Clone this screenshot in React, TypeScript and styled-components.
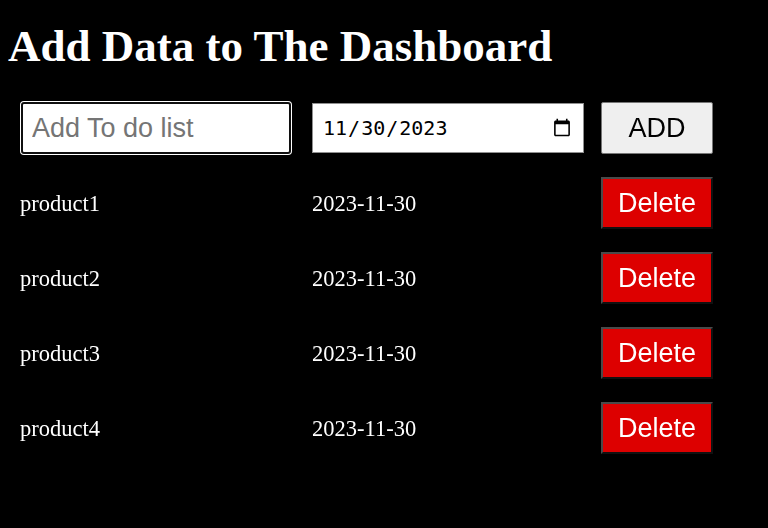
import React, { useState } from "react";
import styled, { createGlobalStyle } from "styled-components";

const Global = createGlobalStyle`
  html, body { background: #000; }
  body { margin: 0; color: #fff; font-family: "Liberation Serif", "Times New Roman", serif; }
`;

const Page = styled.div`
  padding: 19px 0 0 0;
`;

const Title = styled.h1`
  margin: 0 0 0 8px;
  font-family: "Liberation Serif", "Times New Roman", serif;
  font-weight: bold;
  font-size: 45px;
  line-height: 55px;
  color: #fff;
`;

const List = styled.div`
  margin-top: 28px;
  padding-left: 20px;
  display: flex;
  flex-direction: column;
  gap: 23px;
`;

const Row = styled.div`
  display: grid;
  grid-template-columns: 292px 289px 112px;
  align-items: center;
  height: 52px;
`;

const TextInput = styled.input`
  box-sizing: border-box;
  width: 270px;
  height: 52px;
  margin-left: 1px;
  padding: 0 9px;
  border: 2px solid #101010;
  border-radius: 3px;
  box-shadow: 0 0 0 1px #fff;
  outline: none;
  background: #fff;
  font-family: "Liberation Sans", Arial, sans-serif;
  font-size: 27px;
  color: #000;
  &::placeholder { color: #757575; }
`;

const DateInput = styled.input`
  box-sizing: border-box;
  width: 272px;
  height: 50px;
  padding: 0 9px;
  border: 1px solid #8f8f8f;
  border-radius: 0;
  background: #fff;
  font-family: "DejaVu Sans Mono", monospace;
  font-size: 20px;
  color: #000;
  outline: none;
`;

const Btn = styled.button<{ $danger?: boolean }>`
  box-sizing: border-box;
  width: 112px;
  height: 52px;
  padding: 0;
  font-family: "Liberation Sans", Arial, sans-serif;
  font-size: 27px;
  cursor: pointer;
  color: ${(p) => (p.$danger ? "#fff" : "#000")};
  background: ${(p) => (p.$danger ? "#dd0000" : "#efefef")};
  border: ${(p) => (p.$danger ? "2px solid" : "1px solid #767676")};
  border-color: ${(p) => (p.$danger ? "#4a4a4a #111 #111 #4a4a4a" : "#767676")};
  border-radius: ${(p) => (p.$danger ? "0" : "2px")};
`;

const Cell = styled.span`
  padding-top: 2px;
  font-family: "Liberation Serif", "Times New Roman", serif;
  font-size: 22.5px;
  color: #fff;
`;

type Item = { name: string; date: string };

export default function App() {
  const [items] = useState<Item[]>([
    { name: "product1", date: "2023-11-30" },
    { name: "product2", date: "2023-11-30" },
    { name: "product3", date: "2023-11-30" },
    { name: "product4", date: "2023-11-30" },
  ]);
  return (
    <>
      <Global />
      <Page>
        <Title>Add Data to The Dashboard</Title>
        <List>
          <Row>
            <TextInput placeholder="Add To do list" autoFocus />
            <DateInput type="date" defaultValue="2023-11-30" />
            <Btn>ADD</Btn>
          </Row>
          {items.map((it) => (
            <Row key={it.name}>
              <Cell>{it.name}</Cell>
              <Cell>{it.date}</Cell>
              <Btn $danger>Delete</Btn>
            </Row>
          ))}
        </List>
      </Page>
    </>
  );
}
